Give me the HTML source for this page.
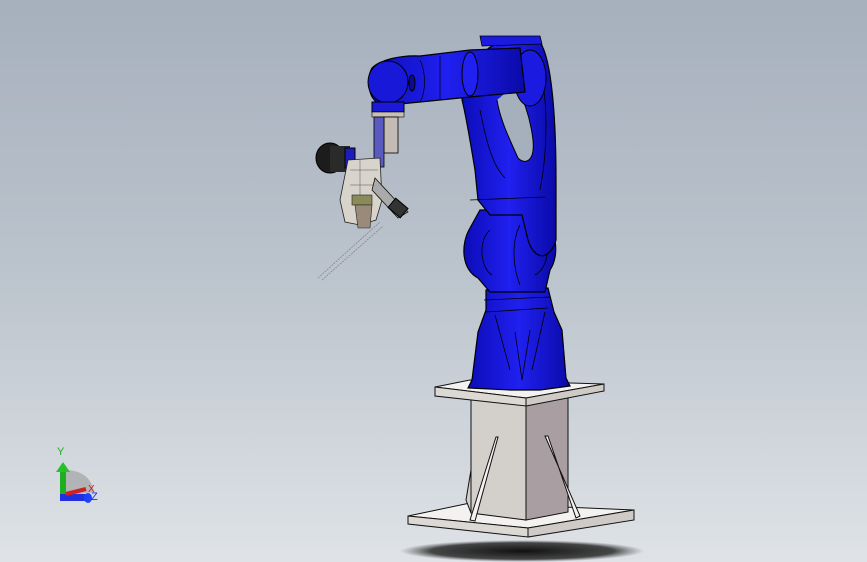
<!DOCTYPE html>
<html><head><meta charset="utf-8"><style>
html,body{margin:0;padding:0;}
body{width:867px;height:562px;overflow:hidden;background:linear-gradient(#a6b0bd 0%,#bcc4cd 50%,#dfe3e7 100%);}
svg{position:absolute;left:0;top:0;}
</style></head><body>
<svg width="867" height="562" viewBox="0 0 867 562" xmlns="http://www.w3.org/2000/svg" font-family="Liberation Sans, sans-serif">
<defs>
<radialGradient id="sh" cx="50%" cy="50%" r="50%"><stop offset="0" stop-color="#111"/><stop offset="0.75" stop-color="#2a2a2a" stop-opacity="0.85"/><stop offset="1" stop-color="#555" stop-opacity="0"/></radialGradient>
<linearGradient id="bl" x1="0" x2="1"><stop offset="0" stop-color="#0c0cb8"/><stop offset="0.5" stop-color="#2020f0"/><stop offset="1" stop-color="#0a0aa8"/></linearGradient>
</defs>
<ellipse cx="522" cy="551" rx="122" ry="11" fill="url(#sh)"/>
<polygon points="408,516 470,503 634,510 528,528" fill="#f4f2f0" stroke="#111" stroke-width="1"/>
<polygon points="408,516 528,528 528,537 408,524" fill="#dcd8d4" stroke="#111" stroke-width="1"/>
<polygon points="528,528 634,510 634,520 528,537" fill="#cfcac6" stroke="#111" stroke-width="1"/>
<polygon points="471,398 526,404 526,520 471,513" fill="#d3cfcb" stroke="#111"/>
<polygon points="526,404 568,396 568,512 526,520" fill="#a99fa2" stroke="#111"/>
<polygon points="466,500 471,470 471,513" fill="#d3cfcb" stroke="#111"/>
<polygon points="496,437 470,520 475,521 498,437" fill="#f4f2f0" stroke="#111"/>
<polygon points="545,436 580,516 576,518 548,436" fill="#f4f2f0" stroke="#111"/>
<polygon points="435,387 470,380 604,384 526,398" fill="#f4f2f0" stroke="#111"/>
<polygon points="435,387 526,398 526,406 435,396" fill="#dcd8d4" stroke="#111"/>
<polygon points="526,398 604,384 604,391 526,406" fill="#cfcac6" stroke="#111"/>
<!-- robot base -->
<path d="M468,388 L472,380 L478,332 L486,310 L486,290 L548,288 L554,312 L562,330 L566,378 L570,386 L540,390 L510,390 Z" fill="url(#bl)" stroke="#000" stroke-width="1.2"/>
<path d="M486,312 L548,308 M495,315 L510,370 M545,312 L532,370 M515,332 L522,380 L530,330 M484,300 L550,297" stroke="#000" fill="none" stroke-width="0.8"/>
<!-- lower joint -->
<path d="M470,228 C460,245 462,270 478,278 L490,292 L545,292 L550,270 C560,255 556,230 545,222 L540,210 L480,210 Z" fill="url(#bl)" stroke="#000" stroke-width="1.2"/>
<path d="M490,230 C478,240 480,268 492,275 M540,232 C552,245 548,268 535,275 M520,225 C512,240 512,265 520,285" stroke="#000" fill="none" stroke-width="0.8"/>
<!-- vertical arm -->
<path d="M462,100 C462,80 478,50 500,42 L520,38 L540,42 C552,60 556,120 556,180 L556,240 C550,260 535,262 528,240 L522,215 L490,215 L478,200 L475,170 C470,140 466,115 462,100 Z" fill="url(#bl)" stroke="#000" stroke-width="1.2"/>
<path d="M497,100 C500,120 510,140 518,158 C525,165 535,162 533,140 C530,115 522,95 515,85" fill="#a6b0bd" stroke="#000" stroke-width="1"/>
<path d="M470,200 L545,197 M480,110 C486,140 492,165 505,178 M540,70 C548,100 548,150 540,190" stroke="#000" fill="none" stroke-width="0.8"/>
<path d="M480,36 L540,36 L542,44 L482,46 Z" stroke="#000" fill="#1a1ae0" stroke-width="0.8"/>
<ellipse cx="530" cy="78" rx="16" ry="28" fill="#1a1ae0" stroke="#000"/>
<!-- upper arm -->
<path d="M372,68 C380,60 400,55 420,56 L470,50 L520,48 L525,92 L480,96 L440,100 L400,104 L380,104 C368,100 366,78 372,68 Z" fill="url(#bl)" stroke="#000" stroke-width="1.2"/>
<ellipse cx="388" cy="82" rx="20" ry="21" fill="#1818d8" stroke="#000"/>
<ellipse cx="470" cy="74" rx="8" ry="22" fill="#2020f0" stroke="#000"/>
<ellipse cx="412" cy="83" rx="3" ry="8" fill="#0c0c90" stroke="#000"/>
<path d="M420,60 C426,72 426,92 420,102 M440,56 L440,99" stroke="#000" fill="none" stroke-width="0.7"/>
<path d="M372,102 L404,102 L404,112 L372,112 Z" fill="#1a1ad8" stroke="#000"/>
<rect x="372" y="112" width="32" height="5" fill="#c8c0b8" stroke="#000" stroke-width="0.6"/>
<rect x="384" y="117" width="14" height="36" fill="#c4bcb4" stroke="#000" stroke-width="0.8"/>
<rect x="374" y="117" width="10" height="50" fill="#5a5ac0" stroke="#000" stroke-width="0.8"/>
<!-- tool -->
<ellipse cx="330" cy="158" rx="14" ry="15" fill="#1c1c1c" stroke="#000"/>
<rect x="330" y="146" width="20" height="26" fill="#2a2a2a"/>
<rect x="345" y="148" width="10" height="20" fill="#1c1cb8" stroke="#000"/>
<path d="M348,160 L380,158 L382,200 L376,220 L360,225 L345,222 L340,200 Z" fill="#d8d4cc" stroke="#222" stroke-width="0.8"/>
<path d="M350,170 L378,170 M350,185 L378,185 M360,160 L360,222" stroke="#555" stroke-width="0.5"/>
<rect x="352" y="195" width="20" height="10" fill="#8a8a5a" stroke="#222" stroke-width="0.6"/>
<path d="M355,205 L372,205 L370,228 L358,228 Z" fill="#9a8a7a" stroke="#222" stroke-width="0.6"/>
<path d="M375,178 L400,205 L408,212 L398,218 L372,190 Z" fill="#aaa" stroke="#111" stroke-width="0.8"/>
<rect x="390" y="202" width="16" height="12" transform="rotate(40 398 208)" fill="#333" stroke="#000"/>
<path d="M318,278 L380,222 M322,280 L383,226" stroke="#888" stroke-width="0.8" stroke-dasharray="2,1"/>
<!-- axis triad -->
<path d="M64,470 Q90,470 94,492 L66,496 Z" fill="#999" opacity="0.6"/>
<rect x="60" y="470" width="6" height="28" fill="#1fae1f"/>
<polygon points="56,472 63,462 70,472" fill="#28c028"/>
<rect x="60" y="494" width="30" height="7" fill="#2030e0"/>
<ellipse cx="88" cy="498" rx="4" ry="5" fill="#2040ff"/>
<path d="M66,494 L86,489" stroke="#d02020" stroke-width="4"/>
<text x="57" y="455" font-size="11" fill="#20b020">Y</text>
<text x="88" y="492" font-size="10" fill="#d02020">X</text>
<text x="91" y="500" font-size="11" fill="#2030e0">Z</text>
</svg>
</body></html>
